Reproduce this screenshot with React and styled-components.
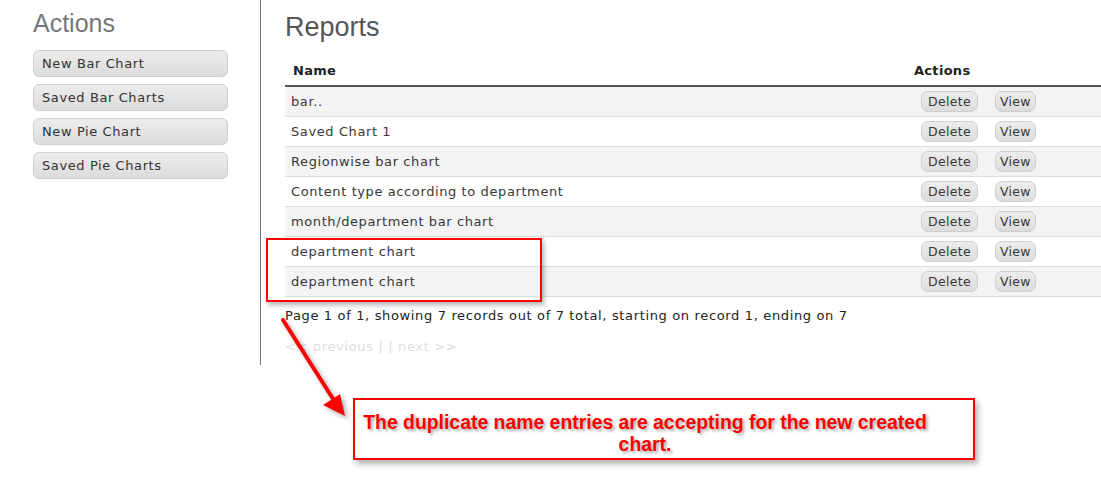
import React from "react";
import styled, { createGlobalStyle } from "styled-components";

const GlobalStyle = createGlobalStyle`
  html, body {
    margin: 0;
    padding: 0;
    background: #fff;
    font-family: "DejaVu Sans", Verdana, sans-serif;
    color: #333;
  }
`;

const reports = [
  "bar..",
  "Saved Chart 1",
  "Regionwise bar chart",
  "Content type according to department",
  "month/department bar chart",
  "department chart",
  "department chart",
];

const sideActions = ["New Bar Chart", "Saved Bar Charts", "New Pie Chart", "Saved Pie Charts"];

const Page = styled.div`
  position: relative;
  width: 1101px;
  height: 483px;
  overflow: hidden;
  display: flex;
  align-items: flex-start;
`;

const Sidebar = styled.div`
  width: 227px;
  height: 365px;
  padding-left: 33px;
  border-right: 1px solid #777;
  flex-shrink: 0;
`;

const Heading = styled.h2`
  margin: ${({ $top }) => $top || 9}px 0 ${({ $bottom }) => $bottom || 13}px;
  font-family: "Liberation Sans", Arial, sans-serif;
  font-weight: normal;
  font-size: ${({ $size }) => $size || 25}px;
  line-height: 28px;
  color: ${({ $color }) => $color || "#777"};
`;

const SideList = styled.div`
  display: flex;
  flex-direction: column;
  gap: 7px;
  width: 195px;
`;

const SideButton = styled.button`
  height: 27px;
  padding: 0 8px;
  text-align: left;
  font-family: "DejaVu Sans", Verdana, sans-serif;
  font-size: 13px;
  letter-spacing: 0.6px;
  color: #333;
  border: 1px solid #cfcfcf;
  border-radius: 6px;
  background: linear-gradient(#ececec, #dcdcdc);
`;

const Main = styled.div`
  flex: 1;
  padding-left: 24px;
`;

const Table = styled.table`
  width: 816px;
  border-collapse: collapse;
`;

const HeadCell = styled.th`
  text-align: left;
  height: 30px;
  padding: 0 0 0 ${({ $pad }) => $pad}px;
  font-family: "DejaVu Sans", Verdana, sans-serif;
  font-size: 13px;
  letter-spacing: 0.3px;
  font-weight: bold;
  color: #222;
  border-bottom: 2px solid #555;
  width: ${({ $w }) => ($w ? `${$w}px` : "auto")};
`;

const Row = styled.tr`
  background: ${({ $odd }) => ($odd ? "#f3f3f3" : "#fff")};
  border-bottom: 1px solid #dddddd;
`;

const Cell = styled.td`
  height: 29px;
  padding: 0 0 0 ${({ $pad }) => $pad}px;
  font-size: 13px;
  letter-spacing: 0.6px;
  color: #383838;
  white-space: nowrap;
`;

const ActionGroup = styled.div`
  display: flex;
  gap: 17px;
`;

const SmallButton = styled.button`
  height: 21px;
  padding: 0 ${({ $px }) => $px}px;
  font-family: "DejaVu Sans", Verdana, sans-serif;
  font-size: 12.5px;
  letter-spacing: 0.3px;
  color: #383838;
  border: 1px solid #cfcfcf;
  border-radius: 7px;
  background: linear-gradient(#ececec, #dcdcdc);
`;

const Summary = styled.p`
  margin: 11px 0 0;
  font-size: 13px;
  letter-spacing: 0.65px;
  color: #222;
  line-height: 16px;
`;

const Pager = styled.p`
  margin: 15px 0 0;
  font-size: 13px;
  letter-spacing: 0.65px;
  color: #ddd;
  line-height: 16px;
`;

const Highlight = styled.div`
  position: absolute;
  left: 266px;
  top: 238px;
  width: 272px;
  height: 60px;
  border: 2px solid #f00;
  box-shadow: 2px 3px 5px rgba(0, 0, 0, 0.3);
`;

const Callout = styled.div`
  position: absolute;
  left: 353px;
  top: 398px;
  width: 618px;
  height: 58px;
  border: 2px solid #f00;
  box-shadow: 3px 4px 6px rgba(0, 0, 0, 0.3);
  display: flex;
  align-items: center;
`;

const CalloutText = styled.div`
  width: 580px;
  padding-top: 7px;
  text-align: center;
  font-family: "Liberation Sans", Arial, sans-serif;
  font-weight: bold;
  font-size: 19.4px;
  line-height: 22px;
  color: #f00;
  text-shadow: 2px 2px 3px rgba(0, 0, 0, 0.35);
`;

const ArrowSvg = styled.svg`
  position: absolute;
  left: 0;
  top: 0;
  pointer-events: none;
  filter: drop-shadow(3px 3px 2px rgba(0, 0, 0, 0.3));
`;

export default function App() {
  return (
    <>
      <GlobalStyle />
      <Page>
        <Sidebar>
          <Heading>Actions</Heading>
          <SideList>
            {sideActions.map((a) => (
              <SideButton key={a}>{a}</SideButton>
            ))}
          </SideList>
        </Sidebar>
        <Main>
          <Heading $size={27} $color="#555" $top={13} $bottom={14}>Reports</Heading>
          <Table>
            <thead>
              <tr>
                <HeadCell $pad={8}>Name</HeadCell>
                <HeadCell $pad={7} $w={187}>Actions</HeadCell>
              </tr>
            </thead>
            <tbody>
              {reports.map((r, i) => (
                <Row key={i} $odd={i % 2 === 0}>
                  <Cell $pad={6}>{r}</Cell>
                  <Cell $pad={14}>
                    <ActionGroup>
                      <SmallButton $px={6}>Delete</SmallButton>
                      <SmallButton $px={4}>View</SmallButton>
                    </ActionGroup>
                  </Cell>
                </Row>
              ))}
            </tbody>
          </Table>
          <Summary>
            Page 1 of 1, showing 7 records out of 7 total, starting on record 1, ending on 7
          </Summary>
          <Pager>&lt;&lt; previous | | next &gt;&gt;</Pager>
        </Main>
        <Highlight />
        <ArrowSvg width="1101" height="483">
          <line x1="283" y1="320" x2="335" y2="402" stroke="#f00" strokeWidth="4" strokeLinecap="round" />
          <polygon points="345,416 323,405 340,394" fill="#f00" />
        </ArrowSvg>
        <Callout>
          <CalloutText>The duplicate name entries are accepting for the new created chart.</CalloutText>
        </Callout>
      </Page>
    </>
  );
}
